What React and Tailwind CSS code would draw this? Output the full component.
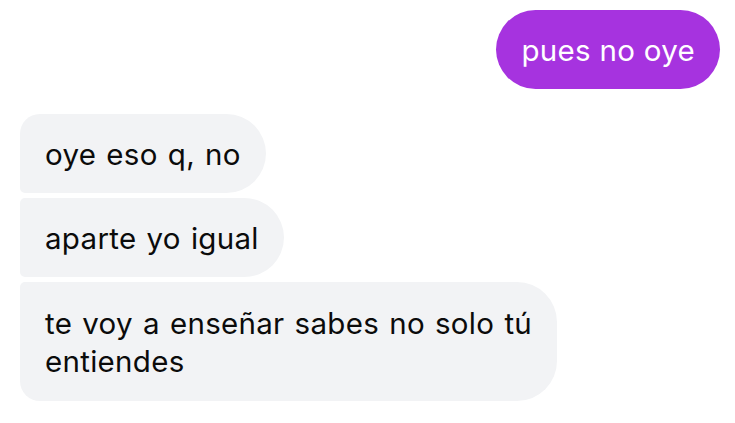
export default function App() {
  return (
    <div
      className="w-[735px] h-[423px] bg-white overflow-hidden pl-5 pr-[15px] pt-[10px] text-[29.5px] leading-[38px]"
      style={{ fontFamily: "Inter, 'Noto Sans', sans-serif" }}
    >
      <div className="flex justify-end">
        <div className="bg-[#a633df] text-white rounded-full px-[25px] py-[20.5px] tracking-[0.3px]">
          pues no oye
        </div>
      </div>

      <div className="flex flex-col items-start gap-[5px] mt-[25px] text-[#0b0b0b] tracking-[0.3px] [word-spacing:1.5px]">
        <div className="bg-[#f2f3f5] rounded-l-[20px] rounded-bl-[5px] rounded-r-[40px] px-[25px] py-[20.5px]">
          oye eso q, no
        </div>
        <div className="bg-[#f2f3f5] rounded-l-[5px] rounded-r-[40px] px-[25px] py-[20.5px]">
          aparte yo igual
        </div>
        <div className="bg-[#f2f3f5] rounded-tl-[5px] rounded-bl-[20px] rounded-r-[40px] px-[25px] py-[21.5px]">
          te voy a enseñar sabes no solo tú
          <br />
          entiendes
        </div>
      </div>
    </div>
  );
}
